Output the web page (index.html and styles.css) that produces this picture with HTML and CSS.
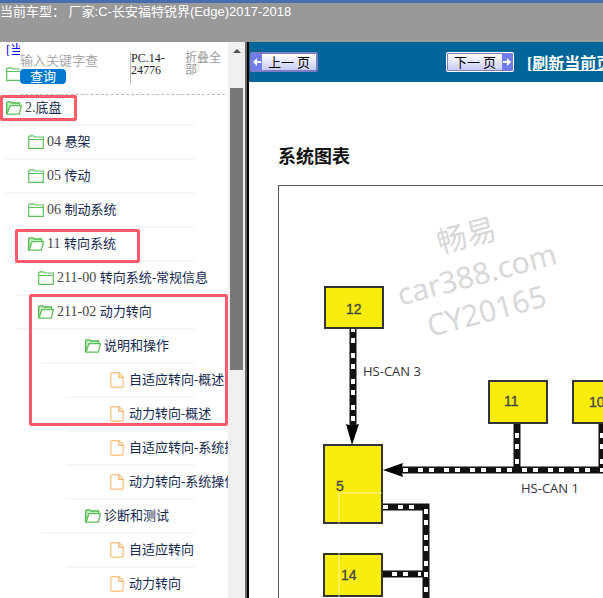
FILE: index.html
```
<!DOCTYPE html>
<html lang="zh-CN">
<head>
    <meta charset="UTF-8">
    <meta name="viewport" content="width=device-width, initial-scale=1.0">
    <title>长安福特锐界(Edge)2017-2018</title>
    <link rel="stylesheet" href="styles.css">
</head>
<body>
    <!-- 图标定义 -->
    <svg class="sprite" aria-hidden="true">
        <symbol id="folder" viewBox="0 0 16 14">
            <path d="M.7 12.8V2L2 .8h3.5L6.8 2h8.5v11.3H.7zM.7 4.5h14.6" fill="#fff" stroke="#5cc05a" stroke-width="1.2"/>
        </symbol>
        <symbol id="folder-open" viewBox="0 0 16 14">
            <path d="M.7 13.2V1.5L1.5.8h3.3L6 2h7.6v2.6" fill="#c9edc7" stroke="#4cbb4a" stroke-width="1.3"/>
            <path d="M.9 13.2L4 4.7h11.4l-2 8.5z" fill="#fff" stroke="#5cc05a" stroke-width="1.3"/>
        </symbol>
        <symbol id="doc" viewBox="0 0 14 16">
            <path d="M1.8.8h7.4l4 4.2v9.2l-1 1H1.8l-1-1V1.8z" fill="#fff" stroke="#fbc68c" stroke-width="1.4"/>
            <path d="M8.8 1v4.4h4.2" fill="none" stroke="#f8b26a" stroke-width="1.2"/>
        </symbol>
    </svg>

    <header class="top-bar">当前车型： 厂家:C-长安福特锐界(Edge)2017-2018</header>

    <div class="main">
        <aside class="sidebar">
            <div class="tree-pane">
                <a class="current" href="#">[当前位置]</a>
                <ul class="tree">
                    <li><a class="node" href="#"><svg class="icon"><use href="#folder"/></svg></a></li>
                    <li>
                        <a class="node" href="#"><svg class="icon"><use href="#folder-open"/></svg><span><span class="num">2.</span>底盘</span></a>
                        <ul class="level2">
                            <li><a class="node" href="#"><svg class="icon"><use href="#folder"/></svg><span><span class="num">04 </span>悬架</span></a></li>
                            <li><a class="node" href="#"><svg class="icon"><use href="#folder"/></svg><span><span class="num">05 </span>传动</span></a></li>
                            <li><a class="node" href="#"><svg class="icon"><use href="#folder"/></svg><span><span class="num">06 </span>制动系统</span></a></li>
                            <li>
                                <a class="node" href="#"><svg class="icon"><use href="#folder-open"/></svg><span><span class="num">11 </span>转向系统</span></a>
                                <ul class="level3">
                                    <li><a class="node" href="#"><svg class="icon"><use href="#folder"/></svg><span><span class="num">211-00 </span>转向系统-常规信息</span></a></li>
                                    <li>
                                        <a class="node" href="#"><svg class="icon"><use href="#folder-open"/></svg><span><span class="num">211-02 </span>动力转向</span></a>
                                        <ul class="level4">
                                            <li>
                                                <a class="node" href="#"><svg class="icon"><use href="#folder-open"/></svg>说明和操作</a>
                                                <ul class="level5">
                                                    <li><a class="node" href="#"><svg class="icon doc"><use href="#doc"/></svg>自适应转向-概述</a></li>
                                                    <li><a class="node" href="#"><svg class="icon doc"><use href="#doc"/></svg>动力转向-概述</a></li>
                                                    <li><a class="node" href="#"><svg class="icon doc"><use href="#doc"/></svg>自适应转向-系统操作</a></li>
                                                    <li><a class="node" href="#"><svg class="icon doc"><use href="#doc"/></svg>动力转向-系统操作</a></li>
                                                </ul>
                                            </li>
                                            <li>
                                                <a class="node" href="#"><svg class="icon"><use href="#folder-open"/></svg>诊断和测试</a>
                                                <ul class="level5">
                                                    <li><a class="node" href="#"><svg class="icon doc"><use href="#doc"/></svg>自适应转向</a></li>
                                                    <li><a class="node" href="#"><svg class="icon doc"><use href="#doc"/></svg>动力转向</a></li>
                                                </ul>
                                            </li>
                                        </ul>
                                    </li>
                                </ul>
                            </li>
                        </ul>
                    </li>
                </ul>

                <form class="search">
                    <div class="search-box">
                        <input type="text" placeholder="输入关键字查询" aria-label="输入关键字查询">
                        <button type="button">查询</button>
                    </div>
                    <div class="code">PC.14-24776</div>
                    <a class="collapse" href="#">折叠全部</a>
                </form>

                <div class="mark mark-chassis"></div>
                <div class="mark mark-steering"></div>
                <div class="mark mark-power"></div>
            </div>
            <div class="scrollbar">
                <svg class="scroll-up" viewBox="0 0 17 17"><path d="M5 11l4-4 4 4z" fill="#505050"/></svg>
                <div class="thumb"></div>
            </div>
        </aside>

        <main class="content">
            <nav class="pager">
                <div class="prev-cell">
                    <button class="page-btn prev" type="button">
                        <span class="arrow"><svg viewBox="0 0 10 16"><path d="M1 8l4-4v3h4v2H5v3z" fill="#fff"/></svg></span>
                        <span class="page-text">上一 页</span>
                    </button>
                </div>
                <button class="page-btn next" type="button">
                    <span class="page-text">下一 页</span>
                    <span class="arrow"><svg viewBox="0 0 10 16"><path d="M9 8L5 4v3H1v2h4v3z" fill="#fff"/></svg></span>
                </button>
                <a class="refresh" href="#">[刷新当前页]</a>
            </nav>
            <section class="article">
                <h1>系统图表</h1>
                <div class="diagram">
                    <svg width="600" height="500" viewBox="0 0 600 500">
                        <!-- 总线 -->
                        <g class="bus">
                            <path d="M74 143V240"/>
                            <path d="M122 284H600"/>
                            <path d="M238 237V284"/>
                            <path d="M323 237V284"/>
                            <path d="M103 321H147V500"/>
                            <path d="M103 388H147"/>
                        </g>
                        <g class="bus-dash">
                            <path d="M74 143V240" stroke-dashoffset="2"/>
                            <path d="M124 284H600" stroke-dashoffset="11"/>
                            <path d="M238 242V280" stroke-dashoffset="21"/>
                            <path d="M323 242V280" stroke-dashoffset="21"/>
                            <path d="M104 321H145" stroke-dashoffset="11"/>
                            <path d="M147 323V500"/>
                            <path d="M104 388H142" stroke-dashoffset="17"/>
                        </g>
                        <path d="M73 259L67 238l6 2 7-2z"/>
                        <path d="M104 284l20-7-2 7 2 7z"/>

                        <!-- 模块 -->
                        <g class="module">
                            <rect x="46" y="101" width="58" height="41"/>
                            <rect x="45" y="259" width="58" height="78"/>
                            <rect x="210" y="195" width="58" height="42"/>
                            <rect x="294" y="195" width="58" height="42"/>
                            <rect x="45" y="368" width="58" height="42"/>
                        </g>
                        <path class="guide" d="M103 307H60V500"/>
                        <g class="module-no">
                            <text x="67" y="128">12</text>
                            <text x="57" y="305">5</text>
                            <text x="225" y="220">11</text>
                            <text x="310" y="221">10</text>
                            <text x="62" y="394">14</text>
                        </g>
                        <g class="bus-name">
                            <text x="84" y="190">HS-CAN 3</text>
                            <text x="242" y="307">HS-CAN 1</text>
                        </g>

                        <!-- 水印 -->
                        <g class="watermark" transform="translate(198 89) rotate(-15)">
                            <text x="0" y="-30">畅易</text>
                            <text x="0" y="10">car388.com</text>
                            <text x="0" y="48">CY20165</text>
                        </g>
                    </svg>
                </div>
            </section>
        </main>
    </div>
</body>
</html>
```
FILE: styles.css
```
* {
    box-sizing: border-box;
}
body {
    margin: 0;
    height: 100vh;
    display: flex;
    flex-direction: column;
    overflow: hidden;
    background-color: #fff;
    font-family: "Liberation Serif", "Noto Sans CJK SC", serif;
    font-size: 13px;
}
ul {
    list-style: none;
    margin: 0;
    padding: 0;
}
a {
    text-decoration: none;
}
.sprite {
    position: absolute;
    width: 0;
    height: 0;
}

/* 顶部车型 */
.top-bar {
    flex: none;
    height: 42px;
    border-top: 3px solid #4a6db0;
    background-color: #999;
    color: #fff;
    font-family: "Liberation Sans", "Noto Sans CJK SC", sans-serif;
    line-height: 18px;
    white-space: nowrap;
}
.main {
    flex: 1;
    min-height: 0;
    display: flex;
}

/* 左侧目录 */
.sidebar {
    flex: none;
    display: flex;
    width: 249px;
    border-right: 2px solid #000;
}
.tree-pane {
    position: relative;
    flex: 1;
    overflow: hidden;
}
.current {
    display: block;
    height: 16px;
    padding-left: 6px;
    line-height: 16px;
    color: #00f;
    white-space: nowrap;
}
.tree {
    margin: 0 34px 0 6px;
}
.node {
    display: flex;
    align-items: center;
    gap: 3px;
    height: 34px;
    border-bottom: 2px solid #f6f6f6;
    color: #142850;
    line-height: 20px;
    white-space: nowrap;
}
.icon {
    flex: none;
    width: 16px;
    height: 14px;
}
.icon.doc {
    width: 14px;
    height: 16px;
    margin-right: 2px;
}
.num {
    font-size: 14px;
    color: #444;
    white-space: pre;
}
.level2 .node {
    padding-left: 22px;
}
.level3 {
    margin-left: 10px;
}
.level4,
.level5 {
    margin-left: 25px;
}
.level4 .node {
    padding-left: 44px;
}

/* 搜索条，盖在目录上面 */
.search {
    position: absolute;
    top: 0;
    left: 20px;
    right: 3px;
    height: 53px;
    display: flex;
    padding-top: 10px;
    border-bottom: 1px dashed #bbb;
    background-color: #fff;
    font-size: 12px;
    line-height: 12px;
}
.search-box {
    display: flex;
    flex-direction: column;
    align-items: flex-start;
    width: 110px;
}
.search-box input {
    width: 78px;
    height: 17px;
    padding: 0;
    border: none;
    outline: none;
    font-family: inherit;
    font-size: 13px;
}
.search-box input::placeholder {
    color: #a9a9a9;
}
.search-box button {
    width: 46px;
    height: 15px;
    padding: 0;
    border: none;
    border-radius: 4px;
    background-color: #0078d0;
    color: #fff;
    font-family: inherit;
    font-size: 13px;
    line-height: 14px;
    cursor: pointer;
}
.code {
    width: 55px;
    height: 32px;
    border-left: 1px solid #bbb;
    color: #222;
}
.collapse {
    width: 38px;
    color: #999;
}

/* 红色标注框 */
.mark {
    position: absolute;
    border: 3px solid #ff5a69;
    border-radius: 2px;
    pointer-events: none;
}
.mark-chassis {
    left: 0;
    top: 53px;
    width: 77px;
    height: 26px;
}
.mark-steering {
    left: 15px;
    top: 187px;
    width: 125px;
    height: 34px;
}
.mark-power {
    left: 29px;
    top: 252px;
    width: 199px;
    height: 132px;
}

.scrollbar {
    width: 19px;
    border-right: 2px solid #666;
    background-color: #f0f0f0;
}
.scroll-up {
    display: block;
    width: 17px;
    height: 17px;
    margin-bottom: 29px;
}
.thumb {
    width: 13px;
    height: 282px;
    margin-left: 2px;
    background-color: #787878;
}

/* 右侧内容 */
.content {
    flex: 1;
    min-width: 0;
    overflow: hidden;
}
.pager {
    display: flex;
    align-items: center;
    height: 40px;
    padding-left: 1px;
    background-color: #069;
    white-space: nowrap;
}
.prev-cell {
    flex: none;
    width: 196px;
}
.page-btn {
    flex: none;
    display: flex;
    align-items: stretch;
    width: 68px;
    height: 20px;
    padding: 0;
    border: 2px solid #7d7dc8;
    border-radius: 2px;
    background: linear-gradient(#fff, #c8ccf4);
    color: #000;
    font-family: "Noto Sans CJK SC", sans-serif;
    font-size: 13px;
    line-height: 15px;
    cursor: pointer;
}
.page-btn.next {
    outline: 1px solid #fff;
    outline-offset: -1px;
}
.page-text {
    flex: 1;
    text-align: center;
}
.arrow {
    width: 10px;
    background-color: #6f7df0;
}
.arrow svg {
    display: block;
    width: 10px;
    height: 16px;
}
.refresh {
    margin-left: 13px;
    color: #fff;
    font-size: 16px;
    font-weight: bold;
    text-decoration: underline;
}
.article {
    padding: 60px 0 0 29px;
}
h1 {
    margin: 0 0 16px;
    color: #111;
    font-family: "Noto Sans CJK SC", sans-serif;
    font-size: 18px;
    line-height: 27px;
}
.diagram {
    border: 1px solid #555;
    border-right: none;
}
.diagram svg {
    display: block;
}
.bus path {
    fill: none;
    stroke: #111;
    stroke-width: 7;
}
.bus-dash path {
    fill: none;
    stroke: #fff;
    stroke-width: 4;
    stroke-dasharray: 5 6 5 10;
}
.module rect {
    fill: #f8ec0c;
    stroke: #333;
    stroke-width: 2;
}
.module-no {
    fill: #444;
    stroke: #444;
    stroke-width: 0.3;
    font-family: "Liberation Sans", sans-serif;
    font-size: 14px;
}
.bus-name {
    fill: #333;
    font-family: "Open Sans", sans-serif;
    font-size: 13px;
}
.guide {
    fill: none;
    stroke: #fff;
    stroke-opacity: 0.6;
}
.watermark {
    fill: #d8d8d8;
    font-family: "Noto Sans", "Noto Sans CJK SC", sans-serif;
    font-size: 30px;
    text-anchor: middle;
}
```
